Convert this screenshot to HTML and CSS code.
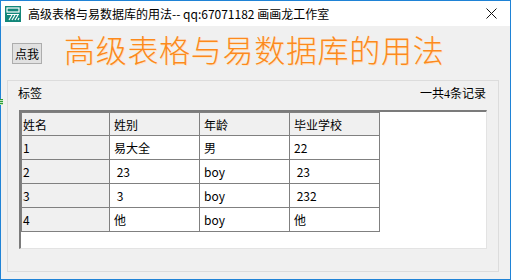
FILE: index.html
```html
<!DOCTYPE html>
<html lang="zh">
<head>
  <meta charset="UTF-8">
  <title>高级表格与易数据库的用法</title>
  <link rel="stylesheet" href="styles.css">
</head>
<body>
  <div class="window">
    <div class="titlebar">
      <svg class="app-icon" width="16" height="16" viewBox="0 0 16 16" aria-hidden="true">
        <rect x="0" y="0" width="16" height="16" fill="#13877a"/>
        <rect x="2" y="2" width="12" height="4" fill="none" stroke="#fff" stroke-width="1.2"/>
        <path d="M2 8.5h12M4 14l3-5M7 14l3-5M10 14l3-5M13 14l1-2" stroke="#fff" stroke-width="1.2" fill="none"/>
      </svg>
      <span class="title-text">高级表格与易数据库的用法-- qq:67071182 画画龙工作室</span>
      <svg class="close-btn" width="11" height="11" viewBox="0 0 11 11" aria-label="关闭">
        <path d="M0.5 0.5l10 10M10.5 0.5l-10 10" stroke="#111" stroke-width="1"/>
      </svg>
    </div>

    <div class="client">
      <span class="edge-mark"></span>
      <div class="top-row">
        <button class="btn">点我</button>
        <h1 class="big-title">高级表格与易数据库的用法</h1>
      </div>

      <div class="panel">
        <div class="panel-head">
          <span>标签</span>
          <span class="count">一共4条记录</span>
        </div>

        <div class="grid-frame">
          <div class="grid">
            <div class="cell head first">姓名</div>
            <div class="cell head">姓别</div>
            <div class="cell head">年龄</div>
            <div class="cell head">毕业学校</div>

            <div class="cell first">1</div>
            <div class="cell">易大全</div>
            <div class="cell">男</div>
            <div class="cell">22</div>

            <div class="cell first">2</div>
            <div class="cell"> 23</div>
            <div class="cell">boy</div>
            <div class="cell"> 23</div>

            <div class="cell first">3</div>
            <div class="cell"> 3</div>
            <div class="cell">boy</div>
            <div class="cell"> 232</div>

            <div class="cell first">4</div>
            <div class="cell">他</div>
            <div class="cell">boy</div>
            <div class="cell">他</div>
          </div>
        </div>
      </div>
    </div>
  </div>
</body>
</html>
```

FILE: styles.css
```css
html, body {
  margin: 0;
  padding: 0;
  background: #fff;
  font-family: "Noto Sans CJK SC", "Noto Sans", sans-serif;
  font-size: 12px;
  color: #000;
}

.window {
  width: 511px;
  height: 280px;
  box-sizing: border-box;
  border: 1px solid #1f83d6;
  display: flex;
  flex-direction: column;
  background: #f0f0f0;
}

.titlebar {
  height: 25px;
  background: #fff;
  display: flex;
  align-items: center;
}

.app-icon {
  margin-left: 4px;
  flex-shrink: 0;
}

.title-text {
  margin-left: 7px;
  font-size: 12px;
  line-height: 16px;
  white-space: nowrap;
}

.close-btn {
  margin-left: auto;
  margin-right: 13px;
}

.client {
  position: relative;
  flex: 1;
  display: flex;
  flex-direction: column;
}

/* petite marque verte sur le bord gauche */
.edge-mark {
  position: absolute;
  left: -1px;
  top: 73px;
  width: 3px;
  height: 6px;
  background: repeating-linear-gradient(to bottom, #2e9e3a 0, #2e9e3a 1px, #bfe6b8 1px, #bfe6b8 2px);
}

.top-row {
  height: 54px;
  display: flex;
  align-items: flex-start;
}

.btn {
  margin: 17px 0 0 11px;
  width: 30px;
  height: 21px;
  padding: 0;
  background: #e1e1e1;
  border: 1px solid #adadad;
  font-family: "Noto Sans CJK SC", sans-serif;
  font-size: 12px;
  line-height: 17px;
  color: #000;
}

.big-title {
  margin: 3px 0 0 22px;
  font-size: 31px;
  font-weight: 300;
  line-height: 40px;
  letter-spacing: 0.7px;
  color: #fd8a1c;
  text-shadow: 1px 1px 0 #fde6c6;
  white-space: nowrap;
}

.panel {
  flex: 1;
  margin: 0 11px 7px 6px;
  border: 1px solid #dcdcdc;
  display: flex;
  flex-direction: column;
}

.panel-head {
  display: flex;
  justify-content: space-between;
  padding: 5px 12px 0 10px;
  line-height: 16px;
  font-family: "Liberation Serif", "Noto Sans CJK SC", serif;
  font-size: 12px;
}

.grid-frame {
  margin: 8px 11px 0 11px;
  height: 139px;
  box-sizing: border-box;
  background: #fff;
  border-top: 2px solid #7b7b7b;
  border-left: 2px solid #7b7b7b;
  border-right: 1px solid #e3e3e3;
  border-bottom: 1px solid #e3e3e3;
}

.grid {
  display: grid;
  grid-template-columns: 88px 90px 90px 90px;
  grid-auto-rows: 24px;
  grid-template-rows: 23px;
  width: max-content;
  border-top: 1px solid #808080;
  border-left: 1px solid #808080;
}

.cell {
  box-sizing: border-box;
  border-right: 1px solid #808080;
  border-bottom: 1px solid #808080;
  padding-left: 4px;
  display: flex;
  align-items: center;
  white-space: pre;
  font-size: 12px;
  background: #fff;
}

.cell.first {
  padding-left: 1px;
  background: #f0f0f0;
}

.cell.head {
  background: #f0f0f0;
}
```
